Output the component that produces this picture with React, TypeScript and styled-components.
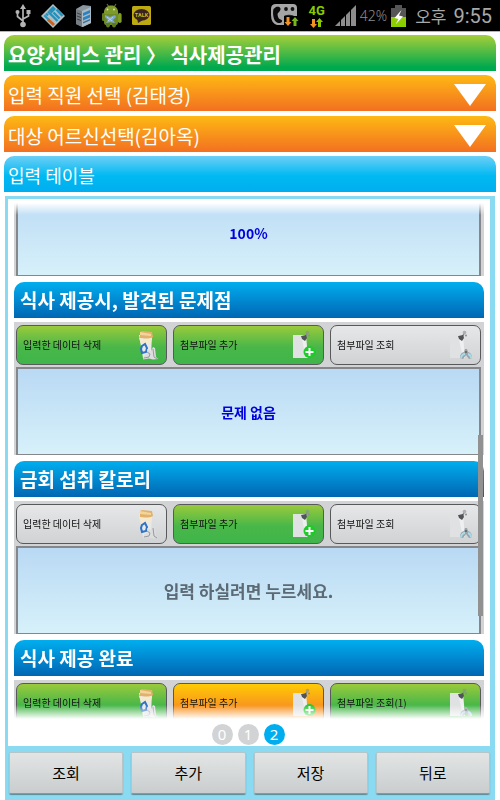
import React from "react";
import styled, { createGlobalStyle, css } from "styled-components";

const GlobalStyle = createGlobalStyle`
  * { box-sizing: border-box; }
  body {
    margin: 0;
    background: #fff;
    font-family: "Noto Sans CJK KR", "Noto Sans", sans-serif;
  }
  button, select { font-family: inherit; margin: 0; }
`;

const Screen = styled.div`
  display: flex;
  flex-direction: column;
  height: 100vh;
  background: #fff;
`;

const StatusBar = styled.header`
  flex: none;
  display: flex;
  align-items: center;
  justify-content: space-between;
  height: 32px;
  padding: 0 8px 0 15px;
  background: #000;
  border-bottom: 1px solid #b5b5b5;
  color: #a8a8a8;
`;

const StatusGroup = styled.div<{ $gap: number }>`
  display: flex;
  align-items: center;
  gap: ${(p) => p.$gap}px;
`;

const Network = styled.span`
  display: flex;
  flex-direction: column;
  align-items: center;
  color: #8cc800;
  font-family: Roboto, sans-serif;
  font-size: 13px;
  line-height: 15px;
  font-weight: 700;
`;

const Battery = styled.span`
  display: flex;
  align-items: center;
  gap: 4px;
  font-size: 14px;
  line-height: 20px;
  color: #8c8c8c;
  font-family: "Noto Sans", sans-serif;
  font-weight: 300;
`;

const Clock = styled.time`
  display: flex;
  align-items: center;
  gap: 7px;
  font-size: 17px;
  line-height: 24px;
`;

const ClockDigits = styled.span`
  font-family: Roboto, sans-serif;
  font-size: 20px;
`;

const Main = styled.main`
  flex: 1;
  min-height: 0;
  display: flex;
  flex-direction: column;
  gap: 4px;
  padding: 3px 4px 0;
`;

const barShape = css`
  display: flex;
  align-items: center;
  width: 100%;
  height: 36px;
  border-radius: 10px 10px 0 0;
  color: #fff;
`;

const PageTitle = styled.h1`
  ${barShape}
  flex: none;
  margin: 0;
  padding: 3px 4px 0;
  background: linear-gradient(#a6ce39, #00a94f 90%);
  font-size: 20px;
  line-height: 28px;
  font-weight: 700;
`;

const Pickers = styled.div`
  flex: none;
  display: flex;
  flex-direction: column;
  gap: 5px;
`;

const Picker = styled.label`
  ${barShape}
  padding: 4px 10px 0 0;
  background: linear-gradient(#fdb913, #f37021);
`;

const PickerSelect = styled.select`
  flex: 1;
  min-width: 0;
  height: 32px;
  padding: 0 4px;
  appearance: none;
  border: 0;
  background: transparent;
  color: #fff;
  font-size: 19px;
  line-height: 28px;
`;

const TableTitle = styled.h2`
  ${barShape}
  flex: none;
  margin: 0;
  padding: 2px 4px 0;
  background: linear-gradient(#6dcff6, #00b9f2 55%, #00aeef);
  font-size: 18px;
  line-height: 28px;
  font-weight: 400;
`;

const Panel = styled.section`
  flex: 1;
  min-height: 0;
  display: flex;
  flex-direction: column;
  margin: 0 1px;
  border: solid #8adaf2;
  border-width: 3px 5px 0 3px;
`;

const Viewport = styled.div`
  position: relative;
  flex: 1;
  min-height: 0;
  margin: 4px 6px 0;
  overflow: hidden;
`;

const Entries = styled.div`
  height: 100%;
  overflow: hidden;
  mask-image: linear-gradient(transparent, #000 12px, #000 calc(100% - 14px), transparent);
`;

const EntryList = styled.div`
  display: flex;
  flex-direction: column;
  gap: 6px;
  margin-top: -15px;
`;

const ScrollThumb = styled.div`
  position: absolute;
  top: 45%;
  right: 1px;
  width: 5px;
  height: 35%;
  background: #919191;
`;

const Entry = styled.section`
  display: flex;
  flex-direction: column;
  gap: 4px;
`;

const EntryTitle = styled.h3`
  ${barShape}
  margin: 0;
  padding: 0 6px;
  background: linear-gradient(#00aeef, #0066b3);
  font-size: 19px;
  line-height: 28px;
  font-weight: 700;
`;

const EntryBody = styled.div`
  display: flex;
  flex-direction: column;
  gap: 2px;
  padding: 0 3px 0 2px;
  background: #d1d3d4;
`;

const Actions = styled.div`
  display: grid;
  grid-template-columns: repeat(3, 1fr);
  gap: 6px;
  padding-top: 3px;
`;

type Tone = "green" | "grey" | "orange";

const tones: Record<Tone, string> = {
  green: "linear-gradient(#9aca3c, #49b749 55%, #3fb54a)",
  grey: "linear-gradient(#e6e7e9, #d0d2d4)",
  orange: "linear-gradient(#ffcb05, #f7941d 60%, #f58a1f)",
};

const Action = styled.button<{ $tone: Tone }>`
  display: flex;
  align-items: center;
  justify-content: space-between;
  height: 40px;
  padding: 0 7px 0 6px;
  border: 1px solid #58595b;
  border-radius: 7px;
  background: ${(p) => tones[p.$tone]};
  color: #111;
  font-size: 10px;
  line-height: 16px;
  white-space: nowrap;
`;

const Field = styled.button<{ $empty?: boolean }>`
  display: block;
  width: 100%;
  height: 88px;
  padding: 0;
  border: solid #85878a;
  border-width: 2px 2px 1px 2px;
  background: linear-gradient(#b9d9f4, #d7f1fa);
  color: ${(p) => (p.$empty ? "#5b6a74" : "#0000e0")};
  font-size: ${(p) => (p.$empty ? 17 : 14)}px;
  line-height: 24px;
  font-weight: 700;
`;

const Pager = styled.nav`
  flex: none;
  display: flex;
  justify-content: center;
  gap: 5px;
  padding: 5px 2px 1px 0;
`;

const PageDot = styled.button<{ $active: boolean }>`
  width: 21px;
  height: 21px;
  padding: 0;
  border: 0;
  border-radius: 50%;
  background: ${(p) => (p.$active ? "#00aeef" : "#d1d3d4")};
  color: #fff;
  font-family: "Noto Sans", sans-serif;
  font-size: 15px;
  line-height: 21px;
`;

const Footer = styled.footer`
  flex: none;
  display: grid;
  grid-template-columns: repeat(4, 1fr);
  gap: 8px;
  padding: 6px 0 6px 1px;
  background: #8adaf2;
`;

const FooterButton = styled.button`
  height: 42px;
  padding: 0;
  border: 1px solid #b9c4c7;
  border-bottom-color: #8d9699;
  border-radius: 2px;
  background: linear-gradient(#e3e5e5, #c9cdcd);
  box-shadow: 0 1px 1px #5f8894;
  color: #000;
  font-size: 15px;
  line-height: 24px;
`;

const UsbIcon = () => (
  <svg width="16" height="24" viewBox="0 0 16 24" fill="none" stroke="#b4b4b4" strokeWidth="1.7">
    <path d="M8 4v17M2.5 9v3.5L8 17M13.5 9v3L8 15" />
    <path d="M8 0l3 5H5z" fill="#b4b4b4" stroke="none" />
    <circle cx="8" cy="20.5" r="2.8" fill="#b4b4b4" stroke="none" />
    <circle cx="2.5" cy="8" r="2" fill="#b4b4b4" stroke="none" />
    <path d="M11.5 6h4v4h-4z" fill="#b4b4b4" stroke="none" />
  </svg>
);

const DiamondIcon = () => (
  <svg width="24" height="24" viewBox="0 0 24 24">
    <path d="M12 0l12 12-12 12L0 12z" fill="#aebfc5" />
    <path d="M12 2l3 3-4.500 4.500-3-3z" fill="#2291bd" />
    <path d="M7 7.500l9.500 9.500M5 9.500l2 2M12.500 8.500l6 6M15.500 5.500l6 6.500" stroke="#2291bd" strokeWidth="2.400" />
    <path d="M2.500 12l1.500-1.500 5 5L7.500 17z" fill="#2b97c1" />
    <path d="M8 14.500l6 5.500-2 2-6-5.500z" fill="#c8641e" />
  </svg>
);

const ServerIcon = () => (
  <svg width="17" height="22" viewBox="0 0 17 22">
    <path d="M1 4l7-4 8 1v17l-8 4-7-3z" fill="#8b979e" />
    <path d="M1 4l6 2v16l-6-3z" fill="#767e83" />
    <path d="M7 6l9-4v16l-9 4z" fill="#a9bac4" />
    <path d="M8 8l7-3v3l-7 3zM8 12.500l7-3v3l-7 3z" fill="#2c82c1" />
    <path d="M8 17l7-3v1.500l-7 3z" fill="#3a6f97" />
    <path d="M2 8l4 1.500M2 11l4 1.500M2 14l4 1.500" stroke="#394147" />
  </svg>
);

const AndroidIcon = () => (
  <svg width="20" height="25" viewBox="0 0 20 25">
    <path d="M5 1l2 3M14 1l-2 3" stroke="#5f742a" strokeWidth="1.200" />
    <path d="M2 12C1 4 6 2.500 9.500 2.500S17 5 16 12z" fill="#7f9a2c" />
    <path d="M2 11h14v8q0 3-2 3H4q-2 0-2-3z" fill="#6f8c23" />
    <path d="M4 20h4v3q-2 3-4 0zM10 20h4v3q-2 3-4 0z" fill="#5f791f" />
    <rect x="16" y="10" width="3.600" height="10" rx="1.800" fill="#7f9e26" />
    <rect x="0" y="10" width="2.600" height="8" rx="1.300" fill="#637f1f" />
    <circle cx="5.500" cy="6.500" r=".9" fill="#dbe1c2" />
    <circle cx="12" cy="6.500" r=".9" fill="#dbe1c2" />
    <path d="M3 12l5 2 5-2 1 2-3 3 2 3-5-1-4 1 2-3-3-3z" fill="#7fa8d6" />
    <path d="M5 14l5 4M11 14l-5 4" stroke="#b9d0ea" />
  </svg>
);

const TalkIcon = () => (
  <svg width="19" height="19" viewBox="0 0 19 19">
    <rect width="19" height="19" rx="1.500" fill="#bda910" />
    <ellipse cx="9.500" cy="8.800" rx="8" ry="5.800" fill="#3a2321" />
    <path d="M5 12l1 5 5-3z" fill="#3a2321" />
    <text x="9.500" y="11" textAnchor="middle" fontFamily="Roboto, sans-serif" fontWeight="700" fontSize="5.500" fill="#cdb71b">TALK</text>
  </svg>
);

const arrowDown = "M0 5h2V0h3v5h2L3.500 9z";
const arrowUp = "M0 4h2v5h3V4h2L3.500 0z";

const CallIcon = () => (
  <svg width="28" height="23" viewBox="0 0 28 23">
    <path d="M5 0h17q4 0 4 4v8H13v9H6q-6-2-6-10V5q0-5 5-5z" fill="#a5a5a5" />
    <path d="M5 3c2-.8 4-.3 4.500 1.500S8 8 7 9s0 5 1.500 6 3 1 2.500 2.500-3 2-5 1C2 17 1.500 8 2.500 5z" fill="#0b0b0b" />
    <circle cx="15" cy="5" r="1.900" fill="#111" />
    <circle cx="21.500" cy="5" r="1.900" fill="#111" />
    <path d="M13.500 11.500q4.500-1.500 9 0v.5h-9z" fill="#222" />
    <path d="M13 12h15v11H13z" fill="#000" />
    <path d={arrowDown} transform="translate(13.500 13)" fill="#f49221" />
    <path d={arrowUp} transform="translate(20.500 13)" fill="#78b51c" />
  </svg>
);

const DataArrows = () => (
  <svg width="18" height="10" viewBox="0 0 18 10">
    <path d={arrowDown} transform="translate(2 1)" fill="#f49221" />
    <path d={arrowUp} transform="translate(8 0)" fill="#8cc800" />
  </svg>
);

const SignalIcon = () => (
  <svg width="22" height="21" viewBox="0 0 22 21">
    <path d="M0 21L21 0v21z" fill="#8d8d8d" />
    <path d="M5.500 10v11M10.500 7v14M15.500 3v18" stroke="#000" strokeWidth="1" />
  </svg>
);

const BatteryIcon = () => (
  <svg width="15" height="22" viewBox="0 0 15 22">
    <path d="M4 0h7v3h4v19H0V3h4z" fill="#555" />
    <path d="M0 12h15v10H0z" fill="#8cce00" />
    <path d="M10.500 5L3.500 13l4 1-3 5.500 7.500-8-4-1z" fill="#fff" />
  </svg>
);

const Triangle = () => (
  <svg width="32" height="22" viewBox="0 0 32 22" aria-hidden="true">
    <path d="M0 0h32L16 22z" fill="#fff" />
  </svg>
);

const TrashIcon = () => (
  <svg width="22" height="30" viewBox="0 0 22 30" aria-hidden="true">
    <path d="M2 5l13-1-1 23-8 1z" fill="#e8e9e7" />
    <path d="M3 2l2-1 10 1 1 5-4 2-9-1z" fill="#e2b16c" />
    <path d="M3 2l11 2v2L3 5z" fill="#f3d59c" />
    <path d="M2 8l5 1 8-1-1 5-10 1z" fill="#f5ead0" />
    <path d="M5 16l3-2 2 4-1 4-4 1-1-4z" fill="none" stroke="#2f72c6" strokeWidth="2" />
    <path d="M10 19l4 2 2-4 2 1 1 9 2 2-5 .5-4-1-6 1 1-4 3-2z" fill="#dcdddf" />
    <path d="M10 22l3 2-1 3-5 1M16 19l1 8 3 2" fill="none" stroke="#969a9d" />
  </svg>
);

const Pinned = () => (
  <>
    <path d="M1 5h13l2 23H1z" fill="#eeeff0" />
    <path d="M1 5h8l5 23H1z" fill="#dfe1e2" />
    <path d="M12 9l3-5" stroke="#8a8d90" strokeWidth="1.500" />
    <path d="M9 6l5-1 1 3-2 3-3-2z" fill="#505457" />
    <circle cx="15.500" cy="2.500" r="1.800" fill="#8a8e91" fillOpacity=".6" />
    <circle cx="17" cy="5.500" r="1" fill="#8b8f92" />
  </>
);

const AttachIcon = () => (
  <svg width="24" height="30" viewBox="0 0 24 30" aria-hidden="true">
    <Pinned />
    <circle cx="17.500" cy="22" r="6" fill="#1fca2b" />
    <path d="M17.500 18v8M13.500 22h8" stroke="#fff" strokeWidth="2" />
  </svg>
);

const ViewIcon = () => (
  <svg width="24" height="30" viewBox="0 0 24 30" aria-hidden="true">
    <Pinned />
    <path d="M11 28q0-5 4-6l1-3h2l1 3q4 1 4 6l-3 1-3-4-3 4z" fill="#9aa2a7" />
    <path d="M12 28q1-4 4-4M19 24q3 1 3 4" fill="none" stroke="#a6dcec" strokeWidth="2" />
    <circle cx="17" cy="22" r="1" fill="#565c60" />
  </svg>
);

interface EntryData {
  title: string;
  tones: [Tone, Tone, Tone];
  viewLabel: string;
  value?: string;
}

const entries: EntryData[] = [
  { title: "식사 제공시, 발견된 문제점", tones: ["green", "green", "grey"], viewLabel: "첨부파일 조회", value: "문제 없음" },
  { title: "금회 섭취 칼로리", tones: ["grey", "green", "grey"], viewLabel: "첨부파일 조회" },
  { title: "식사 제공 완료", tones: ["green", "orange", "green"], viewLabel: "첨부파일 조회(1)" },
];

export default function App() {
  return (
    <Screen>
      <GlobalStyle />
      <StatusBar>
        <StatusGroup $gap={10}>
          <UsbIcon />
          <DiamondIcon />
          <ServerIcon />
          <AndroidIcon />
          <TalkIcon />
        </StatusGroup>
        <StatusGroup $gap={9}>
          <CallIcon />
          <Network>
            4G
            <DataArrows />
          </Network>
          <StatusGroup $gap={3}>
            <SignalIcon />
            <Battery>
              42%
              <BatteryIcon />
            </Battery>
          </StatusGroup>
          <Clock>
            오후 <ClockDigits>9:55</ClockDigits>
          </Clock>
        </StatusGroup>
      </StatusBar>
      <Main>
        <PageTitle>요양서비스 관리 〉 식사제공관리</PageTitle>
        <Pickers>
          <Picker>
            <PickerSelect aria-label="입력 직원 선택">
              <option>입력 직원 선택 (김태경)</option>
            </PickerSelect>
            <Triangle />
          </Picker>
          <Picker>
            <PickerSelect aria-label="대상 어르신선택">
              <option>대상 어르신선택(김아옥)</option>
            </PickerSelect>
            <Triangle />
          </Picker>
        </Pickers>
        <TableTitle>입력 테이블</TableTitle>
        <Panel>
          <Viewport>
            <Entries>
              <EntryList>
                <EntryBody>
                  <Field>100%</Field>
                </EntryBody>
                {entries.map((entry, i) => (
                  <Entry key={entry.title}>
                    <EntryTitle>{entry.title}</EntryTitle>
                    <EntryBody>
                      <Actions>
                        <Action $tone={entry.tones[0]}>
                          입력한 데이터 삭제
                          <TrashIcon />
                        </Action>
                        <Action $tone={entry.tones[1]}>
                          첨부파일 추가
                          <AttachIcon />
                        </Action>
                        <Action $tone={entry.tones[2]}>
                          {entry.viewLabel}
                          <ViewIcon />
                        </Action>
                      </Actions>
                      {i < entries.length - 1 && (
                        <Field $empty={!entry.value}>{entry.value ?? "입력 하실려면 누르세요."}</Field>
                      )}
                    </EntryBody>
                  </Entry>
                ))}
              </EntryList>
            </Entries>
            <ScrollThumb />
          </Viewport>
          <Pager>
            {[0, 1, 2].map((n) => (
              <PageDot key={n} $active={n === 2}>{n}</PageDot>
            ))}
          </Pager>
          <Footer>
            {["조회", "추가", "저장", "뒤로"].map((label) => (
              <FooterButton key={label}>{label}</FooterButton>
            ))}
          </Footer>
        </Panel>
      </Main>
    </Screen>
  );
}
